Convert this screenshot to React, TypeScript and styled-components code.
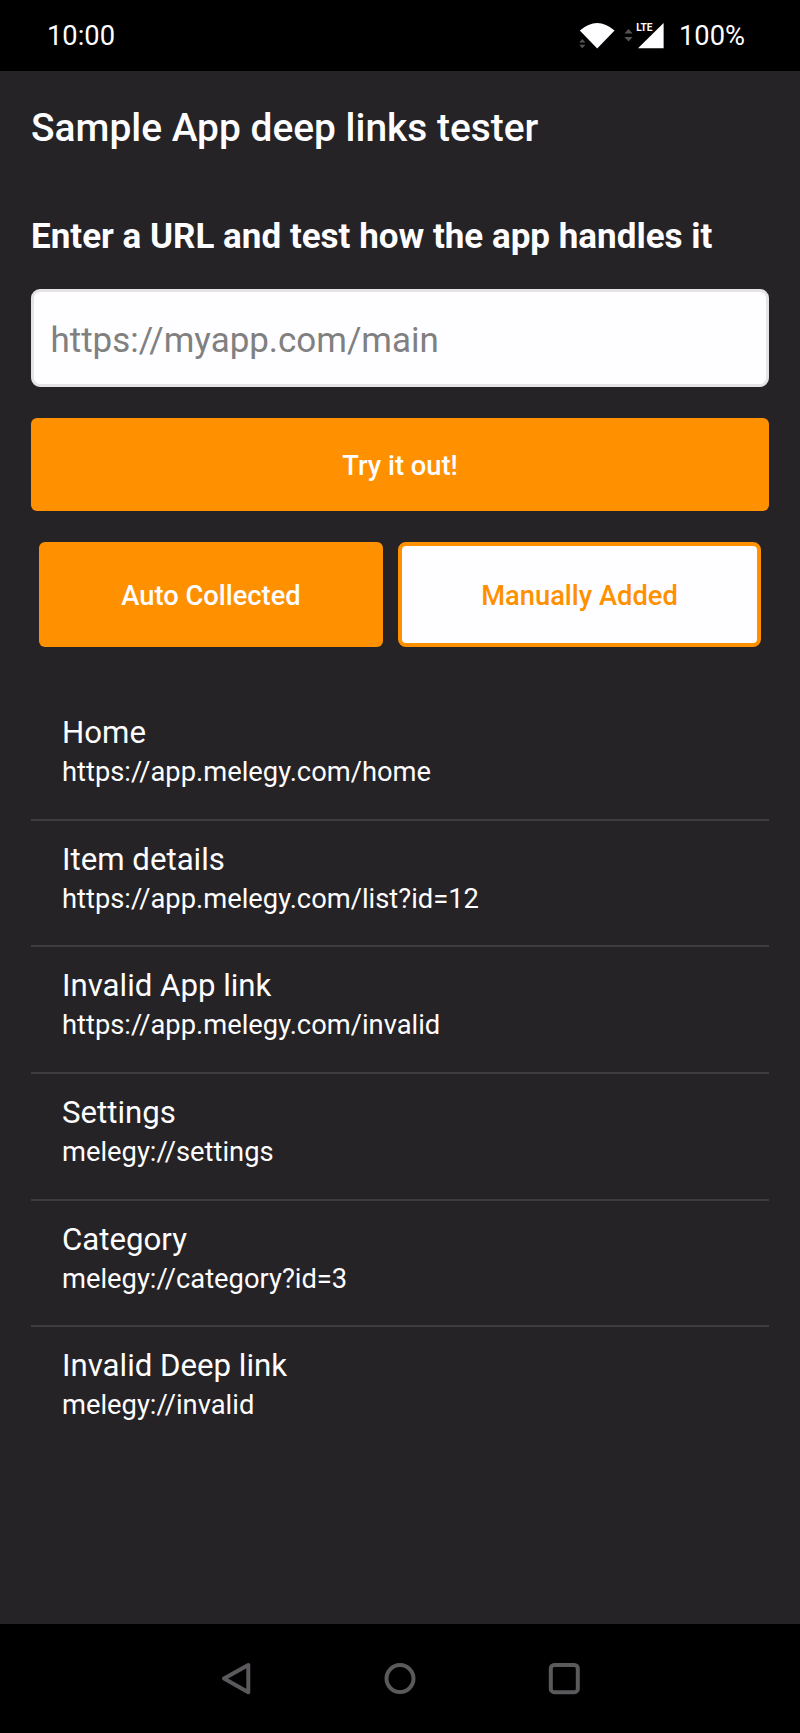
import React from "react";
import styled, { createGlobalStyle } from "styled-components";

const ORANGE = "#ff9100";
const SURFACE = "#252326";
const WHITE = "#fefdff";

const GlobalStyle = createGlobalStyle`
  *, *::before, *::after { box-sizing: border-box; }
  html, body { margin: 0; background: #000; }
  body, button, input { font-family: Roboto, "Liberation Sans", sans-serif; }
`;

const Screen = styled.div`
  display: flex;
  flex-direction: column;
  width: 800px;
  height: 1733px;
  color: ${WHITE};
  background: ${SURFACE};
`;

const StatusBar = styled.header`
  display: flex;
  justify-content: space-between;
  height: 71px;
  padding: 20px 55px 0 47px;
  background: #000;
  font-size: 27.3px;
  line-height: 32px;
`;

const StatusIcons = styled.div`
  display: flex;
  gap: 14px;
`;

const StatusGlyphs = styled.svg`
  display: block;
  width: 86px;
  height: 32px;
`;

const TitleBar = styled.h1`
  display: flex;
  align-items: center;
  height: 113px;
  margin: 0;
  padding: 0 31px;
  font-size: 38.9px;
  font-weight: 500;
  line-height: 46px;
`;

const Content = styled.main`
  flex: 1;
  padding: 32px 31px 0;
`;

const Heading = styled.h2`
  margin: 0 0 31px;
  font-size: 35px;
  font-weight: 700;
  line-height: 42px;
`;

const UrlInput = styled.input`
  display: block;
  width: 100%;
  height: 98px;
  margin-bottom: 31px;
  padding: 5px 16.5px 0;
  border: 3px solid #e5e3e6;
  border-radius: 9px;
  outline: 0;
  background: ${WHITE};
  color: #222;
  font-size: 34.95px;
  &::placeholder { color: #808080; opacity: 1; }
`;

const Button = styled.button<{ $height: number; $outlined?: boolean }>`
  display: flex;
  align-items: center;
  justify-content: center;
  width: 100%;
  height: ${(p) => p.$height}px;
  padding: 3px 0 0;
  border: 0;
  border-radius: ${(p) => (p.$outlined ? 8 : 6)}px;
  background: ${(p) => (p.$outlined ? WHITE : ORANGE)};
  ${(p) => p.$outlined && `border: 4px solid ${ORANGE};`}
  color: ${(p) => (p.$outlined ? ORANGE : WHITE)};
  font-size: 27.3px;
  font-weight: 500;
  line-height: 32px;
`;

const Tabs = styled.div`
  display: grid;
  grid-template-columns: 344px 363px;
  gap: 15px;
  padding: 31px 8px 0;
`;

const LinkList = styled.ul`
  margin: 47px 0 0;
  padding: 0;
  list-style: none;
`;

const LinkRow = styled.li`
  height: 126.65px;
  padding: 19px 31px 0;
  border-bottom: 2px solid #3e3c3f;
  &:last-child { border-bottom: 0; }
`;

const LinkName = styled.div`
  font-size: 31.2px;
  line-height: 40px;
`;

const LinkUrl = styled.div`
  font-size: 27.32px;
  line-height: 38px;
`;

const NavBar = styled.nav`
  display: flex;
  justify-content: center;
  gap: 131px;
  height: 109px;
  padding-top: 38px;
  background: #000;
`;

const NavIcon = styled.svg`
  display: block;
  width: 33px;
  height: 33px;
  fill: none;
  stroke: #5b595c;
  stroke-width: 4;
  stroke-linejoin: round;
`;

const links = [
  { name: "Home", url: "https://app.melegy.com/home" },
  { name: "Item details", url: "https://app.melegy.com/list?id=12" },
  { name: "Invalid App link", url: "https://app.melegy.com/invalid" },
  { name: "Settings", url: "melegy://settings" },
  { name: "Category", url: "melegy://category?id=3" },
  { name: "Invalid Deep link", url: "melegy://invalid" },
];

export default function App() {
  return (
    <Screen>
      <GlobalStyle />
      <StatusBar>
        <span>10:00</span>
        <StatusIcons>
          <StatusGlyphs viewBox="0 1 86 32" fill={WHITE}>
            <path d="M.8 11.6Q18.2-3.5 35.6 11.6L18.2 29.6Z" />
            <path
              d="M.2 23.5 3.3 20l3.1 3.5ZM.2 25.7h6.2l-3.1 3.5ZM45.4 14.4 49.5 10l4.1 4.4ZM45.4 18h8.2l-4.1 4.6Z"
              fill="#555356"
            />
            <path d="M84.6 4v25.3H59Z" />
            <text x="57.2" y="12.3" fontSize="11.4" fontWeight="700" textLength="16.4" lengthAdjust="spacingAndGlyphs">
              LTE
            </text>
          </StatusGlyphs>
          <span>100%</span>
        </StatusIcons>
      </StatusBar>
      <TitleBar>Sample App deep links tester</TitleBar>
      <Content>
        <Heading>Enter a URL and test how the app handles it</Heading>
        <UrlInput placeholder="https://myapp.com/main" />
        <Button $height={93}>Try it out!</Button>
        <Tabs>
          <Button $height={105}>Auto Collected</Button>
          <Button $height={105} $outlined>
            Manually Added
          </Button>
        </Tabs>
        <LinkList>
          {links.map((link) => (
            <LinkRow key={link.name}>
              <LinkName>{link.name}</LinkName>
              <LinkUrl>{link.url}</LinkUrl>
            </LinkRow>
          ))}
        </LinkList>
      </Content>
      <NavBar>
        <NavIcon viewBox="0 0 33 33">
          <path d="M4 16.6 28.3 3v27.2Z" />
        </NavIcon>
        <NavIcon viewBox="0 0 33 33">
          <circle cx="16" cy="16.6" r="13.5" />
        </NavIcon>
        <NavIcon viewBox="0 0 33 33">
          <rect x="2.8" y="3" width="27" height="27.2" rx="3.5" />
        </NavIcon>
      </NavBar>
    </Screen>
  );
}
